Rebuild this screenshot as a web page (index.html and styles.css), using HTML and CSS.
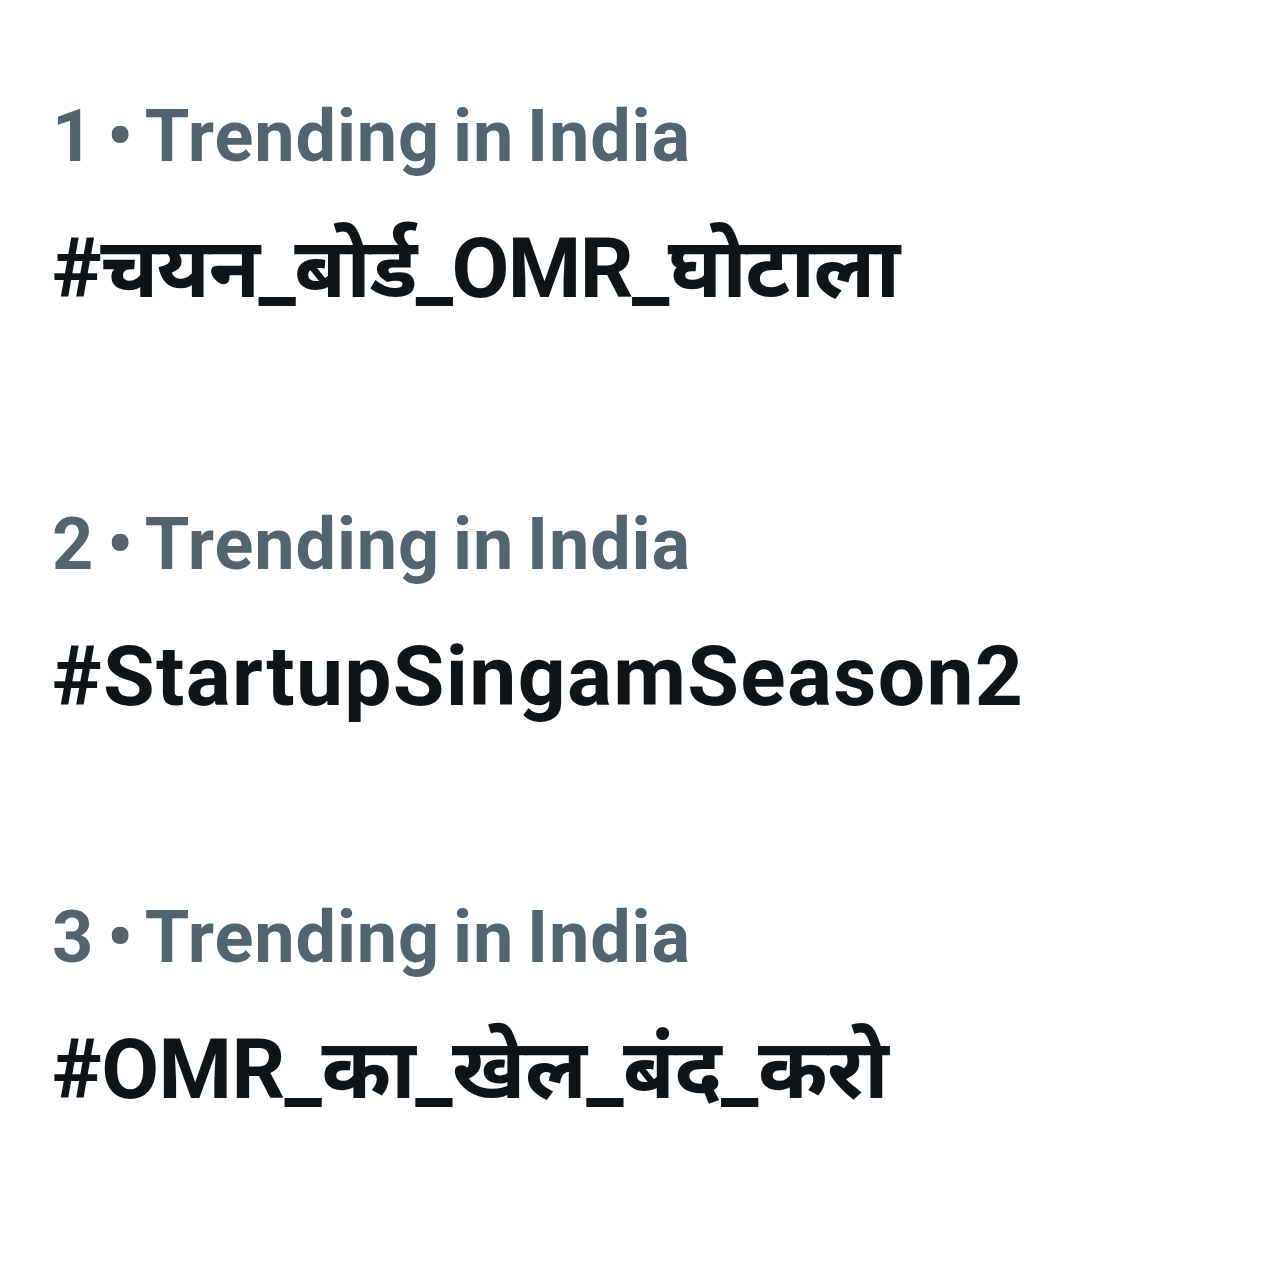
FILE: index.html
```html
<!DOCTYPE html>
<html lang="en">
<head>
<meta charset="utf-8">
<link rel="stylesheet" href="styles.css">
</head>
<body>
<main class="trends">
  <section class="trend trend-deva">
    <div class="meta">1 • Trending in India</div>
    <div class="tag tag-deva tag-tight">#चयन_बोर्ड_OMR_घोटाला</div>
  </section>
  <section class="trend">
    <div class="meta">2 • Trending in India</div>
    <div class="tag">#StartupSingamSeason2</div>
  </section>
  <section class="trend trend-deva">
    <div class="meta">3 • Trending in India</div>
    <div class="tag tag-deva">#OMR_का_खेल_बंद_करो</div>
  </section>
</main>
</body>
</html>
```
FILE: styles.css
```css
html, body {
  margin: 0;
  padding: 0;
  background: #ffffff;
}
.trends {
  width: 1280px;
  height: 1280px;
  box-sizing: border-box;
  padding: 95px 0 0 52px;
  display: flex;
  flex-direction: column;
  font-family: Roboto, "Noto Sans", "Noto Sans Devanagari", sans-serif;
  overflow: hidden;
}
.trend {
  flex: none;
  height: 393px;
  display: flex;
  flex-direction: column;
}
.trend-deva {
  height: 408px;
}
.meta {
  color: #536471;
  font-size: 72px;
  font-weight: 700;
  line-height: 84px;
  letter-spacing: 0.9px;
  word-spacing: -6px;
}
.tag {
  color: #0f1419;
  font-size: 84px;
  font-weight: 700;
  line-height: 100px;
  margin-top: 40px;
  letter-spacing: 1.3px;
}
.tag-deva {
  letter-spacing: -0.6px;
}
.tag-tight {
  letter-spacing: -1.6px;
}
```
